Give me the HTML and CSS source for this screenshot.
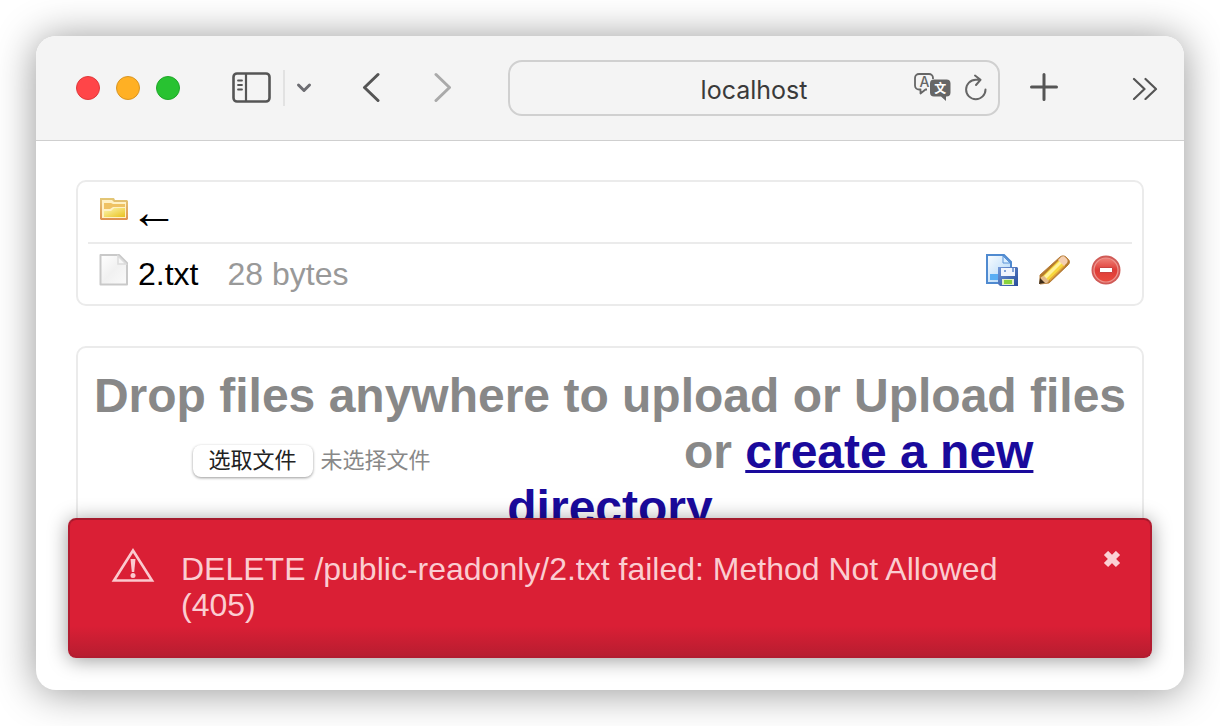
FILE: index.html
```html
<!DOCTYPE html>
<html lang="en">
<head>
<meta charset="utf-8">
<meta name="viewport" content="width=device-width, initial-scale=1">
<title>localhost</title>
<link rel="stylesheet" href="styles.css">
</head>
<body>
<div class="window">
  <header class="toolbar">
    <div class="lights">
      <button class="light close" aria-label="Close window"></button>
      <button class="light minimize" aria-label="Minimize window"></button>
      <button class="light maximize" aria-label="Maximize window"></button>
    </div>
    <div class="sidebar-tools">
      <button class="tool" aria-label="Show sidebar">
        <svg width="40" height="32" viewBox="0 0 40 32" fill="none" stroke="#555" stroke-linecap="round">
          <rect x="1.5" y="1.5" width="36" height="28" rx="3.5" stroke-width="2.6"/>
          <path d="M14 2v27" stroke-width="2.2" stroke-linecap="butt"/>
          <path d="M6 8.5h4M6 13h4M6 17.500h4" stroke-width="1.8"/>
        </svg>
      </button>
      <span class="divider"></span>
      <button class="tool" aria-label="Sidebar options">
        <svg width="16" height="12" viewBox="0 0 16 12" fill="none" stroke="#6d6d72" stroke-width="3" stroke-linecap="round" stroke-linejoin="round"><path d="M2.500 3 8 8.500 13.500 3"/></svg>
      </button>
    </div>
    <nav class="history">
      <button class="tool" aria-label="Back">
        <svg width="18" height="32" viewBox="0 0 18 32" fill="none" stroke="#555" stroke-width="3" stroke-linecap="round" stroke-linejoin="round"><path d="M16 2.500 2.500 15.500 16 28.500"/></svg>
      </button>
      <button class="tool" aria-label="Forward">
        <svg width="18" height="32" viewBox="0 0 18 32" fill="none" stroke="#aaa" stroke-width="3" stroke-linecap="round" stroke-linejoin="round"><path d="M2 2.500 15.500 15.500 2 28.500"/></svg>
      </button>
    </nav>
    <div class="address">
      <input class="url" type="text" value="localhost" aria-label="Address">
      <div class="address-tools">
        <button class="tool" aria-label="Translate">
          <svg width="38" height="30" viewBox="0 0 38 30">
            <path d="M14 17.500h-1.500L7.500 21.500v-4H6a4 4 0 0 1-4-4V6a4 4 0 0 1 4-4h10a4 4 0 0 1 4 4v1" fill="none" stroke="#666" stroke-width="1.800" stroke-linejoin="round"/>
            <text x="11.500" y="14.500" text-anchor="middle" class="glyph-latin">A</text>
            <path d="M21 7.500h12.500a4 4 0 0 1 4 4v9a4 4 0 0 1-4 4H33v4.500l-5-4.500h-7a4 4 0 0 1-4-4v-9a4 4 0 0 1 4-4z" fill="#666"/>
            <text x="27.300" y="20.500" text-anchor="middle" class="glyph-han">文</text>
          </svg>
        </button>
        <button class="tool" aria-label="Reload">
          <svg width="24" height="30" viewBox="0 0 24 30" fill="none" stroke="#666" stroke-width="2" stroke-linecap="round" stroke-linejoin="round"><path d="M21.500 17.500A9.700 9.700 0 1 1 11.800 7.800h4.700M11 3.500l5.500 4.300-4.500 5.200"/></svg>
        </button>
      </div>
    </div>
    <div class="end-tools">
      <button class="tool" aria-label="New tab">
        <svg width="28" height="30" viewBox="0 0 28 30" fill="none" stroke="#555" stroke-width="3" stroke-linecap="round"><path d="M1.500 14h25M14 1.500v25"/></svg>
      </button>
      <button class="tool" aria-label="More tools">
        <svg width="26" height="24" viewBox="0 0 26 24" fill="none" stroke="#555" stroke-width="2.200" stroke-linecap="round" stroke-linejoin="round"><path d="M2 3 12.500 13 2 23M13.500 3 24 13 13.500 23"/></svg>
      </button>
    </div>
  </header>

  <main class="page">
    <ul class="files">
      <li class="file">
        <svg class="icon folder" viewBox="0 0 32 32">
          <defs>
            <linearGradient id="folderEdge" x1="0" y1="0" x2="0" y2="1"><stop offset="0" stop-color="#e3c877"/><stop offset="1" stop-color="#df9150"/></linearGradient>
            <linearGradient id="folderFill" x1="0" y1="0" x2="1" y2="1"><stop offset="0" stop-color="#fdf6b4"/><stop offset="1" stop-color="#e9c21d"/></linearGradient>
          </defs>
          <path d="M2 4h14l1 2h12l1 1v18l-1 1H3l-1-1z" fill="url(#folderEdge)"/>
          <path d="M4 6h10l2 2h12v16H4z" fill="#fff1c4"/>
          <path d="M6 9h7l2 1h12v3H15l-3 2H6z" fill="#efc263"/>
          <path d="M6 17h7l3-3h11v9H6z" fill="url(#folderFill)"/>
        </svg>
        <a class="name parent" href="#up" aria-label="Parent directory">←</a>
      </li>
      <li class="file">
        <svg class="icon" viewBox="0 0 32 32">
          <defs><linearGradient id="pageFill" x1="0" y1="0" x2="1" y2="1"><stop offset="0" stop-color="#fff"/><stop offset=".5" stop-color="#f1f1f1"/><stop offset="1" stop-color="#fafafa"/></linearGradient></defs>
          <path d="M2.500 1h18.500l8 8v21.500H2.500z" fill="url(#pageFill)" stroke="#c9c9c9" stroke-width="2" stroke-linejoin="round"/>
          <path d="M20 2v8h8z" fill="#f7f7f7" stroke="#dcdcdc" stroke-width="1.500"/>
        </svg>
        <a class="name" href="#2.txt">2.txt</a>
        <span class="size">28 bytes</span>
        <div class="actions">
          <button class="tool" aria-label="Save 2.txt">
            <svg class="icon" viewBox="0 0 32 32">
              <defs>
                <linearGradient id="saveFill" x1="0" y1="0" x2="1" y2="1"><stop offset="0" stop-color="#fafdff"/><stop offset="1" stop-color="#a9d2f7"/></linearGradient>
                <linearGradient id="diskFill" x1="0" y1="0" x2="1" y2="1"><stop offset="0" stop-color="#7298d8"/><stop offset="1" stop-color="#284d9b"/></linearGradient>
              </defs>
              <path d="M1 1h17l7 7v21H1z" fill="url(#saveFill)" stroke="#4f8ad0" stroke-width="2"/>
              <path d="M17 2v7h7z" fill="#dcefff" stroke="#5b94d8"/>
              <path d="M4 20h9v6H4z" fill="#5aaef4"/>
              <path d="M12 13h19l1 1v18H14l-2-2z" fill="url(#diskFill)"/>
              <path d="M15 14h14v8H15z" fill="#f2f6fd"/>
              <path d="M18 16h2v2h-2zM26 14h2v4h-2z" fill="#83a4d8"/>
              <path d="M16 25h12v6H16z" fill="#e3f2c4"/>
              <path d="M18 26h8v4h-8z" fill="#88d33c"/>
            </svg>
          </button>
          <button class="tool" aria-label="Rename 2.txt">
            <svg class="icon" viewBox="0 0 32 32">
              <path d="M2 30 2 21 22 3c2-1.500 4-1.500 6 0l2 2c2 2 2 4 0 6L11 29z" fill="#b57b2c" stroke="#b67c38"/>
              <path d="m4 23 17-17 6 5-17 16z" fill="#f8d83e"/>
              <path d="m6 22 16-15 2 2L8 25z" fill="#fff39a"/>
              <path d="m11 26 15-15 1 1-15 15z" fill="#e5aa3c"/>
              <path d="M20 6l3-3c2-1 3-1 5 1s2 3 1 5l-3 3z" fill="#f5cfb0"/>
              <path d="m3 23 3-1 5 5-2 2-7 1z" fill="#e3bb8b"/>
              <path d="m1 30 1-6 5 5z" fill="#3e2c18"/>
            </svg>
          </button>
          <button class="tool" aria-label="Delete 2.txt">
            <svg class="icon" viewBox="0 0 32 32">
              <defs><linearGradient id="stopFill" x1="0" y1="0" x2="0" y2="1"><stop offset="0" stop-color="#ef8178"/><stop offset=".5" stop-color="#df3c36"/><stop offset="1" stop-color="#e94b3f"/></linearGradient></defs>
              <circle cx="16" cy="16" r="14.500" fill="#d05a56"/>
              <circle cx="16" cy="16" r="12" fill="url(#stopFill)" stroke="#ee938c" stroke-width="1.200"/>
              <path d="M9.500 13.500h13v5h-13z" fill="#fff" stroke="#c94240"/>
            </svg>
          </button>
        </div>
      </li>
    </ul>

    <section class="upload">
      <h1 class="upload-title">Drop files anywhere to upload or Upload files
        <span class="picker"><input class="picker-input" type="file" id="upload"><label class="picker-button" for="upload">选取文件</label><span class="picker-status">未选择文件</span></span>
        or <a class="create" href="#new">create a new directory</a></h1>
    </section>
  </main>

  <div class="toast" role="alert">
    <svg class="warning" viewBox="0 0 44 36">
      <path d="M22 3.500 41 33.500H3z" fill="none" stroke="#fbc9ce" stroke-width="2.600"/>
      <path d="M19.500 12h5l-1.300 13h-2.400z" fill="#fbc9ce"/>
      <circle cx="22" cy="28.500" r="2.500" fill="#fbc9ce"/>
    </svg>
    <p class="message">DELETE /public-readonly/2.txt failed: Method Not Allowed (405)</p>
    <button class="tool dismiss" aria-label="Dismiss">
      <svg width="18" height="18" viewBox="0 0 18 18" stroke="#fbd0d4" stroke-width="6"><path d="M3 2l12 12M15 2 3 14"/></svg>
    </button>
  </div>
</div>
</body>
</html>
```
FILE: styles.css
```css
* {
  box-sizing: border-box;
}

body {
  margin: 0;
  padding: 36px;
  background: #fff;
  font-family: "Liberation Sans", "Noto Sans CJK SC", sans-serif;
}

.window {
  position: relative;
  height: calc(100vh - 72px);
  overflow: hidden;
  border-radius: 20px;
  background: #fff;
  box-shadow: 0 2px 40px rgba(0, 0, 0, 0.42);
}

.tool {
  display: flex;
  padding: 0;
  border: 0;
  background: none;
}

.toolbar {
  display: flex;
  align-items: center;
  height: 105px;
  padding: 0 26px 0 40px;
  border-bottom: 1px solid #cfcfcf;
  background: #f4f4f4;
}

.lights {
  display: flex;
  gap: 16px;
}

.light {
  width: 24px;
  height: 24px;
  padding: 0;
  border: 1px solid;
  border-radius: 50%;
}

.close {
  border-color: #e0383a;
  background: #ff4548;
}

.minimize {
  border-color: #d99522;
  background: #ffb024;
}

.maximize {
  border-color: #1fa829;
  background: #28c231;
}

.sidebar-tools {
  display: flex;
  align-items: center;
  gap: 11px;
  margin-left: 52px;
}

.divider {
  width: 2px;
  height: 36px;
  background: #e2e2e2;
}

.history {
  display: flex;
  gap: 54px;
  margin: 0 56px 0 50px;
}

.address {
  position: relative;
  flex: 1;
  min-width: 0;
}

.url {
  display: block;
  width: 100%;
  height: 56px;
  padding: 4px 80px 0;
  border: 2px solid #d0d0d0;
  border-radius: 14px;
  background: transparent;
  color: #3a3a3a;
  font: 25px Inter, sans-serif;
  text-align: center;
}

.address-tools {
  position: absolute;
  top: 12px;
  right: 12px;
  display: flex;
  gap: 13px;
}

.glyph-latin {
  fill: #666;
  font: 500 14px Inter, sans-serif;
}

.glyph-han {
  fill: #fff;
  font: bold 12px "Noto Sans CJK SC", sans-serif;
}

.end-tools {
  display: flex;
  align-items: center;
  gap: 74px;
  margin-left: 30px;
}

.page {
  display: flex;
  flex-direction: column;
  gap: 40px;
  padding: 39px 40px;
}

.files {
  margin: 0;
  padding: 0 10px;
  border: 2px solid #ebebeb;
  border-radius: 10px;
  list-style: none;
}

.file {
  display: flex;
  align-items: center;
  height: 60px;
  padding: 0 10px;
  font-size: 32px;
}

.file + .file {
  height: 62px;
  border-top: 2px solid #ebebeb;
}

.icon {
  width: 32px;
  height: 32px;
  margin-bottom: 8px;
}

.folder {
  margin-bottom: 4px;
}

.name {
  margin-left: 8px;
  color: #000;
  text-decoration: none;
}

.parent {
  margin-left: 0;
  font-size: 48px;
  line-height: 48px;
}

.size {
  margin-left: 29px;
  color: #999;
}

.actions {
  display: flex;
  gap: 20px;
  margin-left: auto;
}

.upload {
  padding: 20px 12px;
  border: 2px solid #ebebeb;
  border-radius: 10px;
}

.upload-title {
  margin: 0;
  color: #888;
  font-size: 48px;
  line-height: 56px;
  text-align: center;
}

.picker {
  position: relative;
  display: inline-flex;
  align-items: center;
  gap: 8px;
  width: 484px;
  height: 32px;
  padding-left: 6px;
  font-size: 22px;
  font-weight: normal;
  line-height: 32px;
  vertical-align: baseline;
}

.picker-input {
  position: absolute;
  width: 1px;
  height: 1px;
  opacity: 0;
}

.picker-button {
  padding: 0 16px;
  border-radius: 8px;
  box-shadow: 0 1px 3px rgba(0, 0, 0, 0.4);
  color: #222;
}

.create {
  color: #1a0a9c;
  text-decoration-thickness: 3px;
  text-underline-offset: 2px;
}

.toast {
  position: absolute;
  right: 32px;
  bottom: 32px;
  left: 32px;
  display: flex;
  align-items: flex-start;
  min-height: 140px;
  padding: 31px 29px 31px 41px;
  border: 2px solid #b21c30;
  border-top-color: #a51a2d;
  border-radius: 8px;
  background: linear-gradient(to top, #b81d30, #da1f35 30px);
  box-shadow: 0 2px 20px rgba(0, 0, 0, 0.4);
}

.warning {
  flex: none;
  width: 44px;
  height: 36px;
  margin-top: -4px;
}

.message {
  flex: 1;
  margin: 0 80px 0 26px;
  color: #fbcdd1;
  font-size: 32px;
  line-height: 36px;
}
```
